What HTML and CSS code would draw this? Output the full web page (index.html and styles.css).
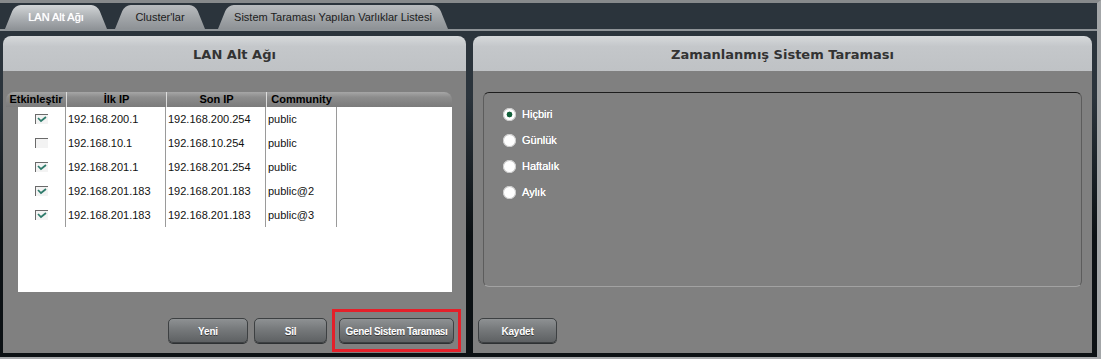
FILE: index.html
```html
<!DOCTYPE html>
<html>
<head>
<meta charset="utf-8">
<title>LAN Alt Ağı</title>
<link rel="stylesheet" href="styles.css">
</head>
<body>
<div id="page">

<div class="tabbar">
	<div class="tab active t1">LAN Alt Ağı</div>
	<div class="tab t2">Cluster'lar</div>
	<div class="tab t3">Sistem Taraması Yapılan Varlıklar Listesi</div>
</div>

<div class="panels">
	<!-- subnet list -->
	<div class="panel left">
		<div class="phead">LAN Alt Ağı</div>
		<div class="pbody">
			<div class="thead">
				<span class="c0">Etkinleştir</span><span class="c1">İlk IP</span><span class="c2">Son IP</span><span class="c3">Community</span>
			</div>
			<div class="tbody">
				<div class="row">
					<span class="c0"><i class="chk"><svg width="13" height="10" viewBox="0 0 13 10"><polyline points="3,4 6,7 11,3" fill="none" stroke="#2e7b6b" stroke-width="1.7"/></svg></i></span>
					<span class="c1">192.168.200.1</span><span class="c2">192.168.200.254</span><span class="c3">public</span>
				</div>
				<div class="row">
					<span class="c0"><i class="chk"></i></span>
					<span class="c1">192.168.10.1</span><span class="c2">192.168.10.254</span><span class="c3">public</span>
				</div>
				<div class="row">
					<span class="c0"><i class="chk"><svg width="13" height="10" viewBox="0 0 13 10"><polyline points="3,4 6,7 11,3" fill="none" stroke="#2e7b6b" stroke-width="1.7"/></svg></i></span>
					<span class="c1">192.168.201.1</span><span class="c2">192.168.201.254</span><span class="c3">public</span>
				</div>
				<div class="row">
					<span class="c0"><i class="chk"><svg width="13" height="10" viewBox="0 0 13 10"><polyline points="3,4 6,7 11,3" fill="none" stroke="#2e7b6b" stroke-width="1.7"/></svg></i></span>
					<span class="c1">192.168.201.183</span><span class="c2">192.168.201.183</span><span class="c3">public@2</span>
				</div>
				<div class="row">
					<span class="c0"><i class="chk"><svg width="13" height="10" viewBox="0 0 13 10"><polyline points="3,4 6,7 11,3" fill="none" stroke="#2e7b6b" stroke-width="1.7"/></svg></i></span>
					<span class="c1">192.168.201.183</span><span class="c2">192.168.201.183</span><span class="c3">public@3</span>
				</div>
			</div>
			<div class="actions right">
				<button class="btn b-new">Yeni</button>
				<button class="btn b-del">Sil</button>
				<button class="btn b-scan marked">Genel Sistem Taraması</button>
			</div>
		</div>
	</div>

	<!-- schedule -->
	<div class="panel sched">
		<div class="phead">Zamanlanmış Sistem Taraması</div>
		<div class="pbody">
			<div class="box">
				<label class="opt"><span class="radio on"></span>Hiçbiri</label>
				<label class="opt"><span class="radio"></span>Günlük</label>
				<label class="opt"><span class="radio"></span>Haftalık</label>
				<label class="opt"><span class="radio"></span>Aylık</label>
			</div>
			<div class="actions">
				<button class="btn b-save">Kaydet</button>
			</div>
		</div>
	</div>
</div>

</div>
</body>
</html>
```

FILE: styles.css
```css
html, body {margin: 0; padding: 0;}
body {
	background: #2b343c;
	font-family: "Liberation Sans", Arial, sans-serif;
	font-size: 11px;
	overflow: hidden;
}

#page {
	width: 1101px;
	height: 359px;
	box-sizing: border-box;
	border-top: 3px solid #878a8c;
	border-right: 4px solid #a3a6a8;
	border-bottom: 2px solid #a9abad;
	display: flex;
	flex-direction: column;
}

/* tabs */
.tabbar {
	height: 26px;
	display: flex;
	align-items: flex-end;
	padding-left: 5px;
	border-bottom: 2px solid #8e9397;
	flex: none;
}
.tab {
	position: relative;
	z-index: 0;
	height: 24px;
	line-height: 25px;
	text-align: center;
	color: #1c1c1c;
	white-space: nowrap;
}
.tab::before,
.tab::after {
	content: "";
	position: absolute;
	top: 0;
	bottom: 0;
	width: 56%;
	z-index: -1;
	background: linear-gradient(#b9bcbf, #a0a4a7 55%, #8e9296);
	border-radius: 6px 6px 0 0;
}
.tab::before {left: 0; transform-origin: bottom left; transform: skewX(-22deg);}
.tab::after {right: 0; transform-origin: bottom right; transform: skewX(22deg);}
.tab.active {color: #fff; text-shadow: 0 0 0.7px #fff;}
.tab.active::before,
.tab.active::after {background: linear-gradient(#d2d5d7, #aeb2b5 50%, #8f9397);}
.t1 {width: 102px;}
.t2 {width: 90px; margin-left: 8px;}
.t3 {width: 230px; margin-left: 13px;}

/* panels */
.panels {
	flex: 1;
	margin-top: 5px;
	display: flex;
	gap: 7px;
	padding: 0 5px 4px 3px;
	background: linear-gradient(#2b343c 0, #2b343c 60px, #0c1114 200px);
}
.panel {
	display: flex;
	flex-direction: column;
}
.panel.left {width: 463px;}
.panel.sched {flex: 1;}
.phead {
	height: 35px;
	line-height: 38px;
	text-align: center;
	border-radius: 8px 8px 0 0;
	background: linear-gradient(#d6d9db, #c4c7ca 30%, #bfc2c5);
	font-family: "DejaVu Sans", Verdana, sans-serif;
	font-weight: bold;
	font-size: 13px;
	color: #333;
}
.pbody {
	flex: 1;
	background: #808080;
	padding-top: 21px;
}
.left .pbody {padding-left: 3px; padding-right: 14px;}

/* table */
.thead {
	display: flex;
	height: 15px;
	line-height: 15px;
	border-radius: 8px 8px 0 0;
	background: linear-gradient(#a6a6a6, #8c8c8c 35%, #7b7b7b);
	font-weight: bold;
	color: #000;
}
.thead span {text-align: center; box-sizing: border-box;}
.thead .c0 {width: 60px;}
.thead .c1, .thead .c2 {width: 100px; border-left: 1px solid #dcdcdc;}
.thead .c3 {width: 70px; border-left: 1px solid #dcdcdc;}

.tbody {
	margin-left: 12px;
	height: 185px;
	background: #fff;
}
.row {display: flex; height: 24px; line-height: 24px; color: #111;}
.row span {box-sizing: border-box; border-right: 1px solid #9a9a9a; padding-left: 2px;}
.row .c0 {width: 48px; display: flex; align-items: center; justify-content: center; padding: 0;}
.row .c1, .row .c2 {width: 100px;}
.row .c3 {width: 71px;}
.chk {
	display: block;
	width: 13px;
	height: 10px;
	box-sizing: border-box;
	border-top: 1px solid #6a6a6a;
	border-left: 1px solid #6a6a6a;
	background: #f3f3f3;
	margin-left: -1px;
}
.chk svg {display: block; margin: -1px 0 0 -1px;}

/* buttons */
.actions {display: flex; margin-top: 26px;}
.actions.right {justify-content: flex-end; margin-right: -2px;}
.btn {
	position: relative;
	height: 25px;
	box-sizing: border-box;
	border: 1px solid #3d4042;
	border-radius: 5px;
	background: linear-gradient(#8e9193, #76797b 45%, #5e6163);
	box-shadow: 0 1px 0 #2e3133;
	color: #fff;
	font-family: "Liberation Sans", Arial, sans-serif;
	font-weight: bold;
	font-size: 10px;
	letter-spacing: -0.2px;
	text-shadow: 0 1px 0 #3a3a3a;
	padding: 2px 0 0;
}
.b-new {width: 80px;}
.b-del {width: 73px; margin-left: 6px;}
.b-scan {width: 115px; margin-left: 12px; letter-spacing: -0.35px;}
.b-save {width: 79px;}
/* annotation frame around the highlighted button */
.marked::after {
	content: "";
	position: absolute;
	left: -8px;
	right: -8px;
	top: -10px;
	bottom: -10px;
	border: 3px solid #e5202a;
}

/* schedule box */
.box {
	margin: 0 10px;
	height: 195px;
	box-sizing: border-box;
	border: 1px solid;
	border-color: #1d1d1d #5c5c5c #a2a2a2 #5c5c5c;
	border-radius: 6px;
	padding: 8px 0 0 19px;
}
.opt {
	display: flex;
	align-items: center;
	height: 26px;
	color: #fff;
	font-size: 11px;
	text-shadow: 0 0 0.6px #fff;
}
.radio {
	width: 13px;
	height: 13px;
	border-radius: 50%;
	background: #fff;
	box-shadow: inset 0 0 0 1px #c8c8c8;
	margin-right: 6px;
}
.radio.on {background: radial-gradient(circle, #12603a 0 2.6px, #fff 3.2px);}
.sched .actions {margin-top: 31px; padding-left: 5px;}
```
